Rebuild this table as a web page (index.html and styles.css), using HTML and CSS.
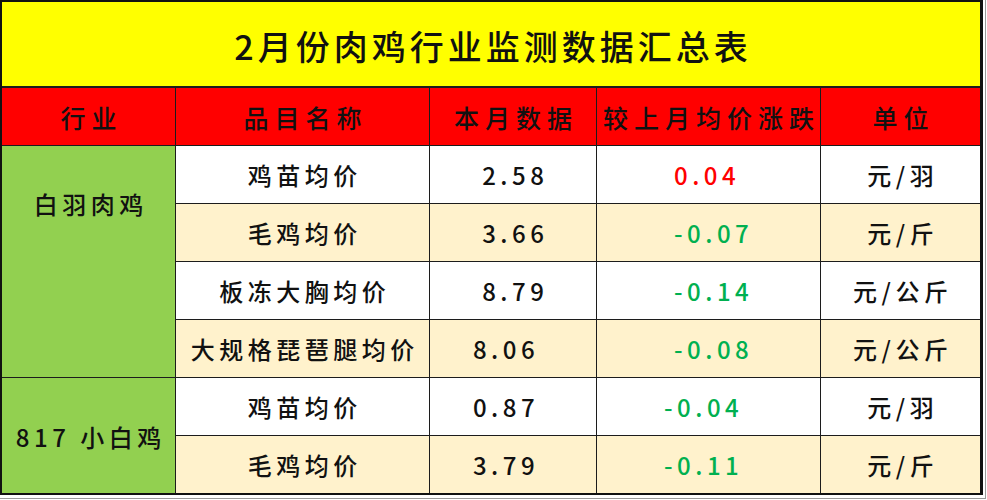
FILE: index.html
```html
<!DOCTYPE html>
<html lang="zh-CN">
<head>
<meta charset="utf-8">
<title>2月份肉鸡行业监测数据汇总表</title>
<link rel="stylesheet" href="styles.css">
</head>
<body>
<div class="frame">
  <div class="sheet">
    <div class="title">2月份肉鸡行业监测数据汇总表</div>

    <div class="hd">行业</div>
    <div class="hd">品目名称</div>
    <div class="hd">本月数据</div>
    <div class="hd">较上月均价涨跌</div>
    <div class="hd">单位</div>

    <div class="group group-a">白羽肉鸡</div>
    <div class="cell w">鸡苗均价</div>
    <div class="cell w">2.58</div>
    <div class="cell w chg up">0.04</div>
    <div class="cell w">元/羽</div>

    <div class="cell c">毛鸡均价</div>
    <div class="cell c">3.66</div>
    <div class="cell c chg down">-0.07</div>
    <div class="cell c">元/斤</div>

    <div class="cell w">板冻大胸均价</div>
    <div class="cell w">8.79</div>
    <div class="cell w chg down">-0.14</div>
    <div class="cell w">元/公斤</div>

    <div class="cell c">大规格琵琶腿均价</div>
    <div class="cell c num-shift">8.06</div>
    <div class="cell c chg down">-0.08</div>
    <div class="cell c">元/公斤</div>

    <div class="group group-b">817 小白鸡</div>
    <div class="cell w">鸡苗均价</div>
    <div class="cell w num-shift">0.87</div>
    <div class="cell w chg chg-b down">-0.04</div>
    <div class="cell w">元/羽</div>

    <div class="cell c">毛鸡均价</div>
    <div class="cell c num-shift">3.79</div>
    <div class="cell c chg chg-b down">-0.11</div>
    <div class="cell c">元/斤</div>
  </div>
</div>
</body>
</html>
```

FILE: styles.css
```css
html, body {
  margin: 0;
  padding: 0;
  background: #ffffff;
}

body {
  font-family: "Noto Sans CJK SC", "Noto Sans", sans-serif;
  color: #111111;
}

.frame {
  width: fit-content;
  padding: 0 2px 3px 0;
  border-right: 1px solid #9a9a9a;
  border-bottom: 1px solid #9a9a9a;
}

.sheet {
  display: grid;
  grid-template-columns: 173px 253px 166px 223px 159px;
  grid-template-rows: 85px repeat(7, 57px);
  gap: 1px;
  background: #1c1c1c;
  border: 2px solid #111111;
  border-right-width: 3px;
}

.title {
  grid-column: 1 / -1;
  background: #ffff00;
  display: flex;
  align-items: center;
  justify-content: center;
  font-size: 34px;
  font-weight: 500;
  letter-spacing: 4px;
  padding-left: 4px;
  padding-top: 2px;
  border-bottom: 1px solid #1c1c1c;
}

.hd {
  background: #ff0000;
  display: flex;
  align-items: center;
  justify-content: center;
  font-size: 25px;
  font-weight: 500;
  letter-spacing: 6px;
  padding-left: 6px;
}

.group {
  background: #92d050;
  display: flex;
  justify-content: center;
  font-size: 24px;
  font-weight: 500;
  letter-spacing: 4.5px;
  padding-left: 4.5px;
}

.group-a {
  grid-row: 3 / span 4;
  align-items: flex-start;
  padding-top: 40px;
}

.group-b {
  grid-row: 7 / span 2;
  align-items: center;
  padding-top: 2px;
}

.cell {
  display: flex;
  align-items: center;
  justify-content: center;
  font-size: 24px;
  font-weight: 500;
  letter-spacing: 4.5px;
  padding-left: 4.5px;
}

.w {
  background: #ffffff;
}

.c {
  background: #fff2cc;
}

.num-shift {
  padding-left: 0;
  padding-right: 14px;
}

.chg {
  justify-content: flex-start;
  padding-left: 77px;
}

.chg-b {
  padding-left: 67px;
}

.up {
  color: #ff0000;
}

.down {
  color: #00b050;
}
```
